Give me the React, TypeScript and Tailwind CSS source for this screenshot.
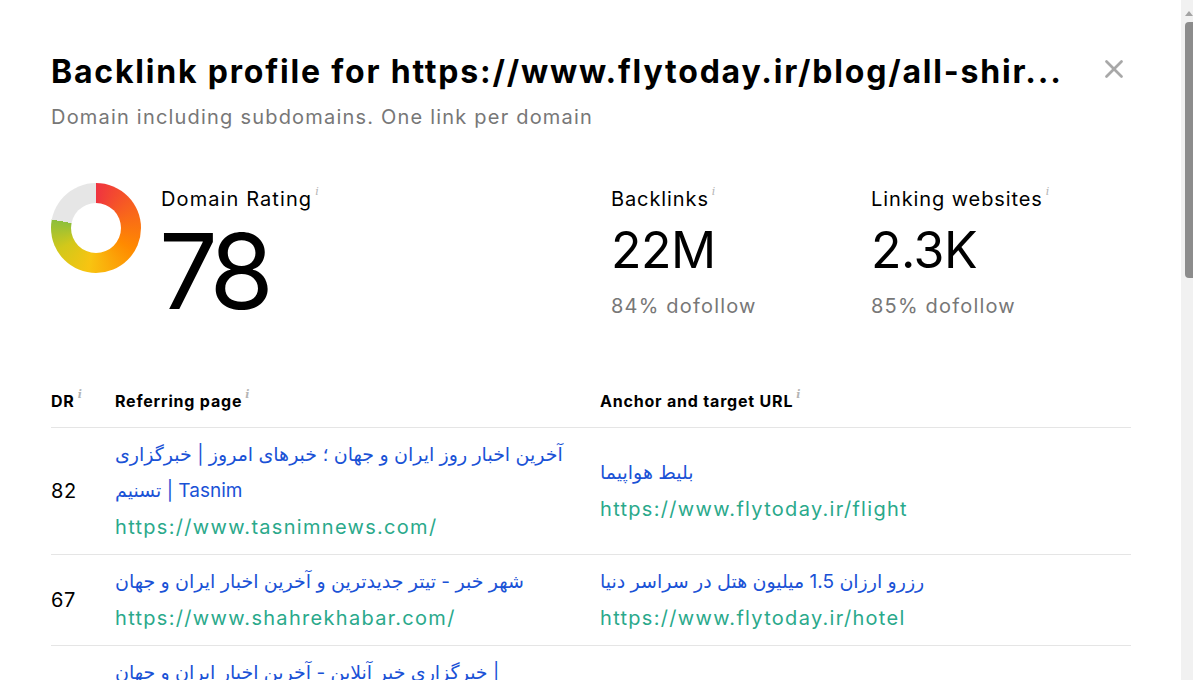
import { X } from "lucide-react";

type Row = {
  dr: number;
  title: string;
  url: string;
  anchor: string;
  target: string;
};

const rows: Row[] = [
  {
    dr: 82,
    title: "آخرین اخبار روز ایران و جهان ؛ خبرهای امروز | خبرگزاری تسنیم | Tasnim",
    url: "https://www.tasnimnews.com/",
    anchor: "بلیط هواپیما",
    target: "https://www.flytoday.ir/flight",
  },
  {
    dr: 67,
    title: "شهر خبر - تیتر جدیدترین و آخرین اخبار ایران و جهان",
    url: "https://www.shahrekhabar.com/",
    anchor: "رزرو ارزان 1.5 میلیون هتل در سراسر دنیا",
    target: "https://www.flytoday.ir/hotel",
  },
  {
    dr: 75,
    title: "خبرگزاری خبر آنلاین - آخرین اخبار ایران و جهان | Khabaronline",
    url: "https://www.khabaronline.ir/",
    anchor: "فلای تودی",
    target: "https://www.flytoday.ir/",
  },
];

function Info() {
  return (
    <span className="ml-[3px] self-start font-['DejaVu_Serif',serif] text-[11px] italic leading-none tracking-normal text-[#b5b5b5]">
      i
    </span>
  );
}

function Donut() {
  return (
    <div className="flex h-[90px] w-[90px] shrink-0 items-center justify-center rounded-full bg-[conic-gradient(#ef3340_0deg,#f8621e_60deg,#ff8a00_120deg,#f8c411_190deg,#d2c81a_240deg,#8dbf3c_281deg,#e6e6e6_281deg,#e6e6e6_360deg)]">
      <div className="h-[50px] w-[50px] rounded-full bg-white" />
    </div>
  );
}

function Stat({ label, value, sub }: { label: string; value: string; sub: string }) {
  return (
    <div className="flex flex-col">
      <div className="flex items-start text-[20px] leading-[26px] tracking-[0.9px] text-black">
        {label}
        <Info />
      </div>
      <div className="mt-[10px] text-[50px] leading-[56px] tracking-[-0.5px] text-black">{value}</div>
      <div className="mt-[15px] text-[20px] leading-[26px] tracking-[1.2px] text-[#777]">{sub}</div>
    </div>
  );
}

export default function App() {
  return (
    <div className="flex h-[680px] w-full overflow-hidden bg-white font-['Inter','DejaVu_Sans',sans-serif]">
      <div className="min-w-0 flex-1 pl-[51px] pr-[50px] pt-[52px]">
        <div className="flex items-start justify-between">
          <h1 className="whitespace-nowrap text-[32px] font-bold leading-[40px] tracking-[1.8px] text-black">
            Backlink profile for https://www.flytoday.ir/blog/all-shir...
          </h1>
          <button className="mr-[2px] mt-[2px] text-[#a8a8a8]">
            <X size={30} strokeWidth={2.2} />
          </button>
        </div>
        <p className="mt-[12px] text-[20px] leading-[26px] tracking-[1.2px] text-[#777]">
          Domain including subdomains. One link per domain
        </p>

        <div className="mt-[53px] grid grid-cols-[560px_260px_1fr]">
          <div className="flex items-start gap-[20px]">
            <Donut />
            <div className="flex flex-col">
              <div className="mt-[3px] flex items-start text-[20px] leading-[26px] tracking-[1.1px] text-black">
                Domain Rating
                <Info />
              </div>
              <div className="-ml-[2px] mt-[9px] text-[104px] leading-[100px] tracking-[-7px] text-black">
                78
              </div>
            </div>
          </div>
          <div className="pt-[3px]">
            <Stat label="Backlinks" value="22M" sub="84% dofollow" />
          </div>
          <div className="pt-[3px]">
            <Stat label="Linking websites" value="2.3K" sub="85% dofollow" />
          </div>
        </div>

        <div className="mt-[68px]">
          <div className="grid grid-cols-[64px_485px_1fr] border-b border-[#e5e5e5] pb-[14px] text-[16px] font-bold leading-[24px] tracking-[0.8px] text-black">
            <div className="flex items-start">
              DR
              <Info />
            </div>
            <div className="flex items-start">
              Referring page
              <Info />
            </div>
            <div className="flex items-start">
              Anchor and target URL
              <Info />
            </div>
          </div>
          {rows.map((r) => (
            <div
              key={r.url}
              className="grid grid-cols-[64px_485px_1fr] items-center border-b border-[#e5e5e5] py-[9px] text-[20px] leading-[36px]"
            >
              <div className="tracking-[0.6px] text-black">{r.dr}</div>
              <div className="pr-[14px]">
                <div className="text-[19px] text-[#1a52d6]">{r.title}</div>
                <div className="tracking-[1.3px] text-[#2aa98b]">{r.url}</div>
              </div>
              <div>
                <div className="text-[19px] text-[#1a52d6]">{r.anchor}</div>
                <div className="tracking-[1.3px] text-[#2aa98b]">{r.target}</div>
              </div>
            </div>
          ))}
        </div>
      </div>

      <div className="flex w-[12px] shrink-0 flex-col items-end bg-[#f1f1f1]">
        <div className="mt-[11px] h-0 w-0 border-x-[4px] border-b-[5px] border-x-transparent border-b-[#a3a3a3]" />
        <div className="mt-[6px] h-[256px] w-[8px] rounded-l-[4px] bg-[#8c8c8c]" />
      </div>
    </div>
  );
}
